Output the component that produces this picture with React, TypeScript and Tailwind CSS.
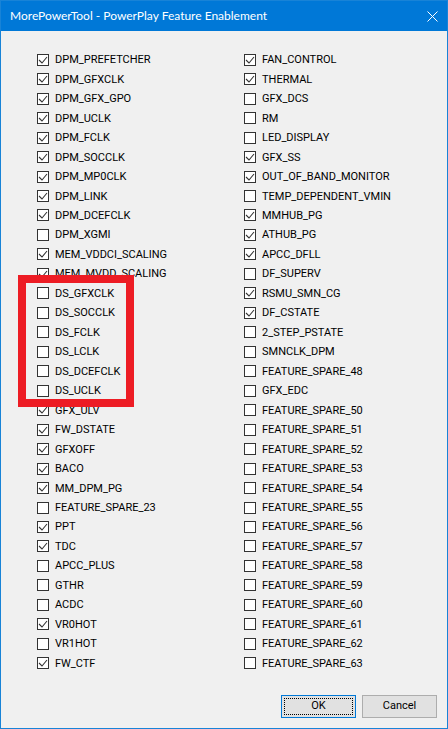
import React from "react";

const left: [string, boolean][] = [
  ["DPM_PREFETCHER", true],
  ["DPM_GFXCLK", true],
  ["DPM_GFX_GPO", true],
  ["DPM_UCLK", true],
  ["DPM_FCLK", true],
  ["DPM_SOCCLK", true],
  ["DPM_MP0CLK", true],
  ["DPM_LINK", true],
  ["DPM_DCEFCLK", true],
  ["DPM_XGMI", false],
  ["MEM_VDDCI_SCALING", true],
  ["MEM_MVDD_SCALING", true],
  ["DS_GFXCLK", false],
  ["DS_SOCCLK", false],
  ["DS_FCLK", false],
  ["DS_LCLK", false],
  ["DS_DCEFCLK", false],
  ["DS_UCLK", false],
  ["GFX_ULV", true],
  ["FW_DSTATE", true],
  ["GFXOFF", true],
  ["BACO", true],
  ["MM_DPM_PG", true],
  ["FEATURE_SPARE_23", false],
  ["PPT", true],
  ["TDC", true],
  ["APCC_PLUS", false],
  ["GTHR", false],
  ["ACDC", false],
  ["VR0HOT", true],
  ["VR1HOT", false],
  ["FW_CTF", true],
];

const right: [string, boolean][] = [
  ["FAN_CONTROL", true],
  ["THERMAL", true],
  ["GFX_DCS", false],
  ["RM", false],
  ["LED_DISPLAY", false],
  ["GFX_SS", true],
  ["OUT_OF_BAND_MONITOR", true],
  ["TEMP_DEPENDENT_VMIN", false],
  ["MMHUB_PG", true],
  ["ATHUB_PG", true],
  ["APCC_DFLL", true],
  ["DF_SUPERV", false],
  ["RSMU_SMN_CG", true],
  ["DF_CSTATE", true],
  ["2_STEP_PSTATE", false],
  ["SMNCLK_DPM", false],
  ["FEATURE_SPARE_48", false],
  ["GFX_EDC", false],
  ...Array.from({ length: 14 }, (_, i) => [`FEATURE_SPARE_${50 + i}`, false] as [string, boolean]),
];

function Check({ label, checked }: { label: string; checked: boolean }) {
  return (
    <div className="h-[19.47px] flex items-center">
      <div className="w-[12px] h-[12px] border border-[#333333] bg-white flex items-center justify-center shrink-0">
        {checked && (
          <svg width="10" height="10" viewBox="0 0 10 10">
            <path d="M1 5 L4 8 L9 2" fill="none" stroke="#333333" strokeWidth="1.1" />
          </svg>
        )}
      </div>
      <span className="ml-[6px] text-[11px] text-black leading-none whitespace-nowrap">
        {label}
      </span>
    </div>
  );
}

export default function App() {
  return (
    <div
      className="relative w-[448px] h-[729px] border border-[#1883d7] bg-[#f0f0f0] flex flex-col overflow-hidden"
      style={{ fontFamily: "Roboto, 'Liberation Sans', sans-serif" }}
    >
      <div className="h-[30px] bg-[#0078d7] flex items-center justify-between pl-[9px] pr-[9px] shrink-0">
        <span
          className="text-white text-[12px]"
          style={{ fontFamily: "Lato, 'Noto Sans', sans-serif" }}
        >
          MorePowerTool - PowerPlay Feature Enablement
        </span>
        <svg width="11" height="11" viewBox="0 0 11 11">
          <path d="M0.5 0.5 L10.5 10.5 M10.5 0.5 L0.5 10.5" stroke="white" strokeWidth="1" />
        </svg>
      </div>
      <div className="flex pl-[36px] pt-[19px]">
        <div className="w-[207px] flex flex-col">
          {left.map(([l, c]) => (
            <Check key={l} label={l} checked={c} />
          ))}
        </div>
        <div className="flex flex-col">
          {right.map(([l, c]) => (
            <Check key={l} label={l} checked={c} />
          ))}
        </div>
      </div>
      <div className="flex-1" />
      <div className="flex justify-end gap-[6px] pr-[10px] pb-[10px]">
        <button className="w-[75px] h-[23px] bg-[#e1e1e1] border border-[#0078d7] p-[2px] text-[11px] text-black">
          <div className="w-full h-full border border-dotted border-black flex items-center justify-center">
            OK
          </div>
        </button>
        <button className="w-[75px] h-[23px] bg-[#e1e1e1] border border-[#adadad] text-[11px] text-black flex items-center justify-center">
          Cancel
        </button>
      </div>
      <div className="absolute left-[17px] top-[274px] w-[116px] h-[132px] border-[8px] border-[#ed1c24]" />
    </div>
  );
}
